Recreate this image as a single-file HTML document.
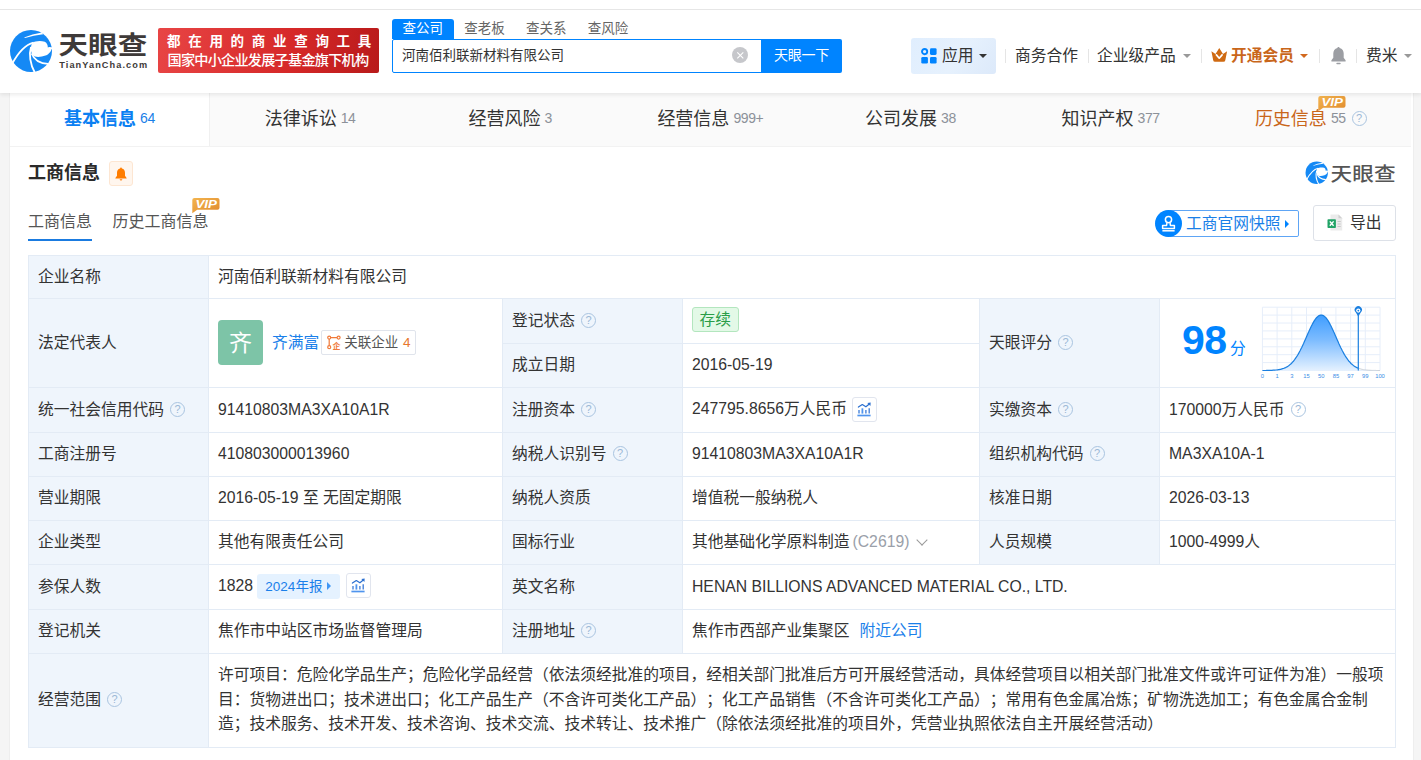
<!DOCTYPE html>
<html lang="zh-CN">
<head>
<meta charset="utf-8">
<title>河南佰利联新材料有限公司 - 天眼查</title>
<style>
*{box-sizing:border-box;margin:0;padding:0}
html,body{width:1421px;height:760px;overflow:hidden}
body{background:#f5f5f5;font-family:"Liberation Sans","Noto Sans CJK SC",sans-serif;font-size:16px;color:#333;position:relative}
a{color:#1a80ea;text-decoration:none}
.abs{position:absolute}
/* header */
#hd{position:absolute;left:0;top:0;width:1421px;height:93px;background:#fff;box-shadow:0 2px 4px rgba(0,0,0,.08);z-index:5}
#hd .topline{position:absolute;left:0;top:9px;width:1421px;height:1px;background:#e6e6e6}
#logo{position:absolute;left:6px;top:26px;width:146px;height:50px}
#banner{position:absolute;left:158px;top:28px;width:221px;height:45px;border-radius:2px;background:linear-gradient(100deg,#e84545 0%,#d62828 60%,#b81a1a 100%);color:#fff;font-weight:bold;text-align:center;overflow:hidden}
#banner .l1{position:absolute;left:0;top:4.5px;width:221px;font-size:13.5px;line-height:18px;letter-spacing:7.7px;padding-left:9px;white-space:nowrap;text-align:left}
#banner .l2{position:absolute;left:0;top:21.5px;width:221px;font-size:14.2px;line-height:20px;letter-spacing:-.8px;padding-left:9.5px;white-space:nowrap;font-weight:500;text-align:left}
#stabs{position:absolute;left:392px;top:19px;height:20px;font-size:13.5px;line-height:19px;white-space:nowrap;display:flex}
#stabs span{display:block;height:20px;width:61.7px;text-align:center;color:#666}
#stabs span.on{background:#0084ff;color:#fff;border-radius:3px 3px 0 0}
#sbox{position:absolute;left:392px;top:39px;width:370px;height:34px;border:1px solid #0084ff;border-radius:2px 0 0 2px;background:#fff;font-size:13.5px;line-height:31px;padding-left:9px;color:#333}
#sclear{position:absolute;left:731.5px;top:46.7px;width:16.6px;height:16.6px;border-radius:50%;background:#c6c7cb}
#sbtn{position:absolute;left:761px;top:39px;width:81px;height:34px;background:#0084ff;color:#fff;font-size:14px;line-height:32px;text-align:center;border-radius:0 2px 2px 0;letter-spacing:-.2px}
.nav{position:absolute;top:38px;height:36px;line-height:35px;font-size:15.75px;color:#333;white-space:nowrap}
.sep{position:absolute;top:49px;width:1px;height:14px;background:#e5e5e5}
.caret{display:inline-block;width:0;height:0;border-left:4px solid transparent;border-right:4px solid transparent;border-top:4px solid #999;vertical-align:middle;margin-left:5px;position:relative;top:-1px}
#app{position:absolute;left:911px;top:38px;width:85px;height:36px;background:linear-gradient(125deg,#e0eefe 0%,#e6f1fd 55%,#dce9fa 100%);border-radius:3px}
/* card */
#card{position:absolute;left:9px;top:93px;width:1405px;height:680px;background:#fff;border-right:1px solid #eee;border-left:1px solid #eee}
#tabs{position:absolute;left:0;top:0;width:1401px;height:54px;background:#fafafa;display:flex;border-bottom:1px solid #f2f2f2}
#tabs .t{width:200.15px;height:53px;line-height:53px;text-align:center;font-size:18px;color:#333;white-space:nowrap;position:relative}
#tabs .t i{font-style:normal;font-size:14px;color:#8c9199;margin-left:4px;position:relative;top:-2.5px;letter-spacing:-.4px}
#tabs .t.on{background:#fff;color:#0b80f2;font-weight:bold;border-right:1px solid #f0f0f0;width:200px}
#tabs .t.on i{color:#1a7fe8;font-weight:normal}
#tabs .t.his{color:#c9661a}
.vip{position:absolute;background:linear-gradient(180deg,#f0b050,#e8952f);color:#fff;font-size:10px;font-weight:bold;font-style:italic;line-height:11px;height:11px;padding:0 3px;border-radius:2px;letter-spacing:.2px}
.q{display:inline-block;width:15px;height:15px;border:1.4px solid #a9c4e0;border-radius:50%;color:#9bb8d6;font-size:11px;line-height:12.5px;letter-spacing:0;font-weight:normal;text-align:center;vertical-align:middle;position:relative;top:-1px;margin-left:6px;font-family:"Liberation Sans",sans-serif}
h2{position:absolute;left:18px;top:67px;font-size:18px;line-height:26px;font-weight:bold;color:#2a2a2a}
/* table */
table{position:absolute;left:18px;top:162px;width:1368px;border-collapse:collapse;table-layout:fixed;font-size:15.75px;color:#333}
td{border:1px solid #e3ebf5;height:44px;padding:0 9px 1px;vertical-align:middle;white-space:nowrap;overflow:hidden;letter-spacing:0;line-height:22px;text-spacing-trim:space-all}
tr.h43 td{height:43px}tr.h45 td{height:45px}
td.k{background:#eff5fc}
#subtabs{position:absolute;left:18px;top:114px;height:34px;font-size:16px;line-height:30px;white-space:nowrap;color:#555}
#subtabs span{display:inline-block;height:34px;margin-right:20.5px}
#subtabs span.on{border-bottom:2px solid #1a7be0}
#snap{position:absolute;left:1146px;top:117px;width:143px;height:27px;border:1px solid #5ea5f5;border-radius:14px 2px 2px 14px;color:#1a7fe8;font-size:15.75px;line-height:25px;padding-left:29px;white-space:nowrap}
#snap .ic{position:absolute;left:-2px;top:-1px;width:27px;height:27px;border-radius:50%;background:#0084ff}
#snap b{display:inline-block;width:0;height:0;border-top:4px solid transparent;border-bottom:4px solid transparent;border-left:4.5px solid #0084ff;margin-left:4px;vertical-align:middle;position:relative;top:-1px}
#exp{position:absolute;left:1303px;top:112px;width:83px;height:36px;border:1px solid #dde1e8;border-radius:3px;font-size:15.75px;line-height:34px;padding-left:36px;color:#333;white-space:nowrap}
#exp .xl{position:absolute;left:13px;top:8px}
tr.scope td{height:94px;white-space:normal;line-height:24.75px;letter-spacing:0;padding-right:11px}
.ava{display:inline-block;width:45px;height:45px;border-radius:4px;background:#7dc4a7;color:#fff;font-size:23px;line-height:46px;text-align:center;vertical-align:middle;margin-right:9px;letter-spacing:0}
.nm{vertical-align:middle}
.rel{display:inline-block;height:25px;border:1px solid #e0e4ec;border-radius:2px;font-size:13.5px;line-height:23px;padding:0 4px 0 5px;margin-left:2px;vertical-align:middle;color:#555}
.rel em{font-style:normal;color:#e8772e;margin-left:1px}
.rel svg{vertical-align:middle;margin-right:3px;position:relative;top:-1px}
.st{display:inline-block;height:25px;padding:0 6.5px;border:1px solid #b3e6be;background:#e3f9e7;color:#2a9d48;font-size:15.75px;line-height:23px;border-radius:3px;position:relative;top:-1px}
.g{color:#9aa0a9;margin-left:3px}
.ibtn{display:inline-block;width:25px;height:25px;border:1px solid #e1e5ee;border-radius:3px;vertical-align:middle;margin-left:5px;position:relative;top:0}
.ibtn svg{position:absolute;left:-.5px;top:-.5px}
.yr{display:inline-block;height:25px;padding:0 8.3px;background:#e5f2ff;color:#1a80ea;font-size:13.5px;line-height:25px;border-radius:3px;vertical-align:middle;margin-left:4px;position:relative;top:0}
.yr b{display:inline-block;width:0;height:0;border-top:4px solid transparent;border-bottom:4px solid transparent;border-left:4.6px solid #3f97f5;margin-left:5px;vertical-align:middle;position:relative;top:-1px}
.chev{display:inline-block;width:8px;height:8px;border-right:1.4px solid #999;border-bottom:1.4px solid #999;transform:rotate(45deg);margin-left:9px;position:relative;top:-3.5px}
td.score{position:relative;padding:0!important}
.n98{position:absolute;left:22px;top:18px;font-size:41px;line-height:46px;font-weight:bold;color:#0084ff;letter-spacing:-.5px}
.fen{position:absolute;left:70px;top:39px;font-size:15.75px;line-height:22px;color:#0084ff}
.chart{position:absolute;left:96px;top:1px}
#tbell{position:absolute;left:99px;top:68px;width:24px;height:25px;border:1px solid #fde6d2;background:#fff6ee;border-radius:3px}
#tbell svg{position:absolute;left:4px;top:4.5px}
</style>
</head>
<body>
<div id="hd">
  <div class="topline"></div>
  <svg id="logo" viewBox="0 0 146 50" width="146" height="50">
    <circle cx="25" cy="25" r="21" fill="#1589f5"/>
    <path d="M18.1 11.4 Q26 7.8 36 6.4 L37.2 8.2 Q27.5 9.3 19 11.9 Z" fill="#fff"/>
    <path d="M26.3 16.8 C29 15.2 34 14.3 38.8 15.8 C41 17 41.9 19.5 41.8 21.4 L43.2 21 L48 21.6 L48 23.4 L45.6 23 C45 26 42 28.8 39.5 29.6 C36 31 31.5 31.2 28.9 30.6 C27 29.8 25.7 27.6 25.2 25.8 C24.5 23.5 24.8 19.5 26.3 16.8 Z" fill="#fff"/>
    <path d="M27.5 16.6 C20 18.5 12.5 26 6 38" fill="none" stroke="#fff" stroke-width="1.7"/>
    <path d="M25 21 C22.8 28 24 38.5 29 47" fill="none" stroke="#fff" stroke-width="1.8"/>
    <path d="M25.6 27.5 C28 33.5 33.5 37.6 42 37.9" fill="none" stroke="#fff" stroke-width="1.8"/>
    <text x="52.6" y="27.6" font-size="25.5" font-weight="700" fill="#3e3a39" textLength="88.6" lengthAdjust="spacingAndGlyphs" font-family="'Liberation Sans','Noto Sans CJK SC',sans-serif">天眼查</text>
    <text x="53.3" y="42" font-size="9.2" font-weight="bold" fill="#3e3a39" textLength="87.8" lengthAdjust="spacing" font-family="'Liberation Sans',sans-serif">TianYanCha.com</text>
  </svg>
  <div id="banner"><div class="l1">都在用的商业查询工具</div><div class="l2">国家中小企业发展子基金旗下机构</div></div>
  <div id="stabs"><span class="on">查公司</span><span>查老板</span><span>查关系</span><span>查风险</span></div>
  <div id="sbox">河南佰利联新材料有限公司</div>
  <div id="sclear"><svg width="16.6" height="16.6" viewBox="0 0 16.6 16.6" style="display:block"><path d="M5.3 5.3L11.3 11.3M11.3 5.3L5.3 11.3" stroke="#fff" stroke-width="1.1"/></svg></div>
  <div id="sbtn">天眼一下</div>
  <div id="app"></div>
  <svg class="abs" style="left:921px;top:48px" width="16" height="16" viewBox="0 0 16 16"><circle cx="3.6" cy="3.6" r="2.6" fill="none" stroke="#0084ff" stroke-width="1.9"/><rect x="9" y="0.3" width="6.6" height="6.6" rx="1.3" fill="#0084ff"/><rect x="0.3" y="9" width="6.6" height="6.6" rx="1.3" fill="#0084ff"/><rect x="9" y="9" width="6.6" height="6.6" rx="1.3" fill="#0084ff"/></svg>
  <div class="nav" style="left:942px">应用<span class="caret" style="border-top-color:#333;margin-left:5.5px"></span></div>
  <div class="sep" style="left:1005px"></div>
  <div class="nav" style="left:1015px">商务合作</div>
  <div class="sep" style="left:1088px"></div>
  <div class="nav" style="left:1097px">企业级产品<span class="caret" style="margin-left:7px"></span></div>
  <div class="sep" style="left:1201px"></div>
  <svg class="abs" style="left:1211px;top:48px" width="16.5" height="14" viewBox="0 0 16.5 14"><path d="M0.4 3.3 L4.5 5.9 L8.25 0.1 L12 5.9 L16.1 3.3 L14.3 12.2 Q14.1 13.7 12.4 13.7 L4.1 13.7 Q2.4 13.7 2.2 12.2 Z" fill="#cf6a12"/><path d="M5.4 6.9 L8.25 10.2 L11.1 6.9" fill="none" stroke="#fff" stroke-width="1.7" stroke-linecap="round" stroke-linejoin="round"/></svg>
  <div class="nav" style="left:1231px;color:#c9661a;font-weight:bold">开通会员<span class="caret" style="border-top-color:#d2691e;margin-left:6px"></span></div>
  <div class="sep" style="left:1319px"></div>
  <svg class="abs" style="left:1330px;top:46px" width="17" height="19" viewBox="0 0 17 19"><path d="M8.5 0.9 C9.2 0.9 9.6 1.4 9.6 2.1 C12.4 2.7 13.7 5 13.7 7.6 L13.7 11.8 L15.6 14.3 L15.6 15.5 L1.4 15.5 L1.4 14.3 L3.3 11.8 L3.3 7.6 C3.3 5 4.6 2.7 7.4 2.1 C7.4 1.4 7.8 0.9 8.5 0.9 Z" fill="#9c9ea3"/><rect x="6.3" y="16.8" width="4.4" height="1.5" rx=".75" fill="#9c9ea3"/></svg>
  <div class="sep" style="left:1356px"></div>
  <div class="nav" style="left:1366px">费米<span class="caret" style="margin-left:6px"></span></div>
</div>
<div id="card">
  <div id="tabs">
    <div class="t on">基本信息<i>64</i></div>
    <div class="t">法律诉讼<i>14</i></div>
    <div class="t">经营风险<i>3</i></div>
    <div class="t">经营信息<i>999+</i></div>
    <div class="t">公司发展<i>38</i></div>
    <div class="t">知识产权<i>377</i></div>
    <div class="t his">历史信息<i>55</i><span class="q" style="margin-left:6px;top:-2px">?</span></div>
  </div>
  <svg class="abs" style="left:1308px;top:3px" width="28" height="16" viewBox="0 0 28 16"><defs><linearGradient id="vg1308" x1="0" y1="0" x2="1" y2="1"><stop offset="0" stop-color="#f3b44f"/><stop offset="1" stop-color="#e08a2c"/></linearGradient></defs><path d="M2.5 0H25.5Q27.5 0 27.5 2V9.8Q27.5 11.8 25.5 11.8H5.2L0.3 15.2V2Q0.3 0 2.5 0Z" fill="url(#vg1308)"/><text x="14.2" y="9.9" text-anchor="middle" font-size="11" font-weight="bold" font-style="italic" fill="#fff" font-family="'Liberation Sans',sans-serif" textLength="21.5" lengthAdjust="spacingAndGlyphs">VIP</text></svg>
  <h2>工商信息</h2>
  <div id="tbell"><svg width="14" height="14" viewBox="0 0 14 14"><path d="M7 0.6C7.6 0.6 7.9 1 7.9 1.5C10 2 11 3.8 11 5.8V8.8L12.6 10.9V11.6H1.4V10.9L3 8.8V5.8C3 3.8 4 2 6.1 1.5C6.1 1 6.4 0.6 7 0.6Z" fill="#ff7d00"/><path d="M5.6 12.3H8.4Q8.2 13.5 7 13.5Q5.8 13.5 5.6 12.3Z" fill="#ff7d00"/></svg></div>
  <svg class="abs" style="left:1295px;top:68px" width="92" height="25" viewBox="0 0 92 25">
    <g transform="translate(-1.6,-1.6) scale(0.533)"><circle cx="25" cy="25" r="21" fill="#1589f5"/>
    <path d="M18.1 11.4 Q26 7.8 36 6.4 L37.2 8.2 Q27.5 9.3 19 11.9 Z" fill="#fff"/>
    <path d="M26.3 16.8 C29 15.2 34 14.3 38.8 15.8 C41 17 41.9 19.5 41.8 21.4 L43.2 21 L48 21.6 L48 23.4 L45.6 23 C45 26 42 28.8 39.5 29.6 C36 31 31.5 31.2 28.9 30.6 C27 29.8 25.7 27.6 25.2 25.8 C24.5 23.5 24.8 19.5 26.3 16.8 Z" fill="#fff"/>
    <path d="M27.5 16.6 C20 18.5 12.5 26 6 38" fill="none" stroke="#fff" stroke-width="2"/>
    <path d="M25 21 C22.8 28 24 38.5 29 47" fill="none" stroke="#fff" stroke-width="2"/>
    <path d="M25.6 27.5 C28 33.5 33.5 37.6 42 37.9" fill="none" stroke="#fff" stroke-width="2"/></g>
    <text x="25.6" y="19.6" font-size="19" font-weight="500" fill="#555" textLength="65" lengthAdjust="spacingAndGlyphs" font-family="'Liberation Sans','Noto Sans CJK SC',sans-serif">天眼查</text>
  </svg>
  <div id="subtabs"><span class="on">工商信息</span><span>历史工商信息</span></div>
  <svg class="abs" style="left:182px;top:105px" width="28" height="16" viewBox="0 0 28 16"><defs><linearGradient id="vg182" x1="0" y1="0" x2="1" y2="1"><stop offset="0" stop-color="#f3b44f"/><stop offset="1" stop-color="#e08a2c"/></linearGradient></defs><path d="M2.5 0H25.5Q27.5 0 27.5 2V9.8Q27.5 11.8 25.5 11.8H5.2L0.3 15.2V2Q0.3 0 2.5 0Z" fill="url(#vg182)"/><text x="14.2" y="9.9" text-anchor="middle" font-size="11" font-weight="bold" font-style="italic" fill="#fff" font-family="'Liberation Sans',sans-serif" textLength="21.5" lengthAdjust="spacingAndGlyphs">VIP</text></svg>
  <div id="snap"><span class="ic"><svg width="27" height="27" viewBox="0 0 27 27"><circle cx="13.5" cy="9.6" r="3.1" fill="none" stroke="#fff" stroke-width="1.5"/><path d="M12 12.4 L11.6 15.4 L7.6 15.4 L7.6 18.4 L19.4 18.4 L19.4 15.4 L15.4 15.4 L15 12.4" fill="none" stroke="#fff" stroke-width="1.5" stroke-linejoin="round"/><path d="M7.4 20.8 L19.6 20.8" stroke="#fff" stroke-width="1.5"/></svg></span>工商官网快照<b></b></div>
  <div id="exp"><svg class="xl" width="16" height="17" viewBox="0 0 16 17"><path d="M3.5 0.5 L11.5 0.5 L15.2 4.2 L15.2 16.5 L3.5 16.5 Z" fill="#ebebeb"/><path d="M11.5 0.5 L15.2 4.2 L11.5 4.2 Z" fill="#d0d0d0"/><path d="M10.5 7.5h3.2M10.5 10h3.2M10.5 12.5h3.2" stroke="#c8c8c8" stroke-width="1.2"/><rect x="0.5" y="5.2" width="8.4" height="8.8" rx="0.8" fill="#21a366"/><path d="M2.8 7.4 L6.6 11.8 M6.6 7.4 L2.8 11.8" stroke="#fff" stroke-width="1.4"/></svg>导出</div>
  <table>
    <colgroup><col style="width:180px"><col style="width:294px"><col style="width:180px"><col style="width:297px"><col style="width:180px"><col style="width:236px"></colgroup>
    <tr class="h43"><td class="k">企业名称</td><td colspan="5">河南佰利联新材料有限公司</td></tr>
    <tr class="h45"><td class="k" rowspan="2">法定代表人</td><td rowspan="2"><span class="ava">齐</span><a class="nm">齐满富</a><span class="rel"><svg width="14" height="15" viewBox="0 0 14 15"><g fill="none" stroke="#f07a3a" stroke-width="1.2"><circle cx="2.2" cy="2.6" r="1.5"/><circle cx="11.6" cy="2.6" r="1.5"/><circle cx="2.2" cy="12.2" r="1.5"/><path d="M3.7 2.6H10.1M2.2 4.1V10.7"/></g><text x="9.6" y="14" font-size="8" text-anchor="middle" fill="#f07a3a" font-weight="bold" font-family="'Liberation Sans','Noto Sans CJK SC',sans-serif">企</text></svg>关联企业 <em>4</em></span></td><td class="k">登记状态<span class="q">?</span></td><td><span class="st">存续</span></td><td class="k" rowspan="2">天眼评分<span class="q">?</span></td><td rowspan="2" class="score"><span class="n98">98</span><span class="fen">分</span><svg class="chart" width="135" height="85" viewBox="0 0 135 85"><defs><linearGradient id="gf" x1="0" y1="0" x2="0" y2="1"><stop offset="0" stop-color="#3f9dff"/><stop offset=".45" stop-color="#7dbcff"/><stop offset="1" stop-color="#e4f1ff"/></linearGradient></defs><path d="M6.4 7.2V70.5M21.1 7.2V70.5M35.8 7.2V70.5M50.5 7.2V70.5M65.2 7.2V70.5M79.9 7.2V70.5M94.6 7.2V70.5M109.3 7.2V70.5M124.0 7.2V70.5M6.4 7.2H124.0M6.4 15.1H124.0M6.4 23.0H124.0M6.4 30.9H124.0M6.4 38.9H124.0M6.4 46.8H124.0M6.4 54.7H124.0M6.4 62.6H124.0M6.4 70.5H124.0" stroke="#e6eefa" stroke-width="1" fill="none"/><path d="M6.4 70.5 L7.1 70.5 L7.8 70.5 L8.5 70.5 L9.2 70.5 L9.9 70.5 L10.6 70.4 L11.3 70.4 L12.0 70.4 L12.7 70.4 L13.4 70.4 L14.1 70.4 L14.8 70.3 L15.5 70.3 L16.2 70.3 L16.9 70.2 L17.6 70.2 L18.3 70.2 L19.0 70.1 L19.7 70.0 L20.4 70.0 L21.1 69.9 L21.8 69.8 L22.5 69.7 L23.2 69.6 L23.9 69.4 L24.6 69.3 L25.3 69.1 L26.0 68.9 L26.7 68.7 L27.4 68.5 L28.1 68.2 L28.8 67.9 L29.5 67.6 L30.2 67.2 L30.9 66.9 L31.6 66.4 L32.3 66.0 L33.0 65.5 L33.7 64.9 L34.4 64.3 L35.1 63.7 L35.8 63.0 L36.5 62.2 L37.2 61.5 L37.9 60.6 L38.6 59.7 L39.3 58.7 L40.0 57.7 L40.7 56.7 L41.4 55.5 L42.1 54.4 L42.8 53.1 L43.5 51.8 L44.2 50.5 L44.9 49.1 L45.6 47.7 L46.3 46.2 L47.0 44.7 L47.7 43.2 L48.4 41.6 L49.1 40.0 L49.8 38.4 L50.5 36.8 L51.2 35.2 L51.9 33.6 L52.6 32.1 L53.3 30.5 L54.0 29.0 L54.7 27.5 L55.4 26.1 L56.1 24.7 L56.8 23.4 L57.5 22.1 L58.2 20.9 L58.9 19.9 L59.6 18.9 L60.3 18.0 L61.0 17.2 L61.7 16.6 L62.4 16.0 L63.1 15.6 L63.8 15.3 L64.5 15.1 L65.2 15.0 L65.9 15.1 L66.6 15.3 L67.3 15.6 L68.0 16.0 L68.7 16.6 L69.4 17.2 L70.1 18.0 L70.8 18.9 L71.5 19.9 L72.2 20.9 L72.9 22.1 L73.6 23.4 L74.3 24.7 L75.0 26.1 L75.7 27.5 L76.4 29.0 L77.1 30.5 L77.8 32.1 L78.5 33.6 L79.2 35.2 L79.9 36.8 L80.6 38.4 L81.3 40.0 L82.0 41.6 L82.7 43.2 L83.4 44.7 L84.1 46.2 L84.8 47.7 L85.5 49.1 L86.2 50.5 L86.9 51.8 L87.6 53.1 L88.3 54.4 L89.0 55.5 L89.7 56.7 L90.4 57.7 L91.1 58.7 L91.8 59.7 L92.5 60.6 L93.2 61.5 L93.9 62.2 L94.6 63.0 L95.3 63.7 L96.0 64.3 L96.7 64.9 L97.4 65.5 L98.1 66.0 L98.8 66.4 L99.5 66.9 L100.2 67.2 L100.9 67.6 L101.6 67.9 L102.3 68.2 L102.3 68.2 L102.3 70.5 L6.4 70.5 Z" fill="url(#gf)"/><path d="M102.3 68.2 L103.2 68.5 L104.1 68.8 L105.0 69.1 L105.9 69.3 L106.8 69.5 L107.7 69.7 L108.6 69.8 L109.5 69.9 L110.4 70.0 L111.3 70.1 L112.2 70.2 L113.1 70.2 L114.0 70.3 L114.9 70.3 L115.8 70.4 L116.7 70.4 L117.6 70.4 L118.5 70.4 L119.4 70.4 L120.3 70.5 L121.2 70.5 L122.1 70.5 L123.0 70.5 L123.9 70.5 L124.0 70.5" fill="none" stroke="#c9d0d8" stroke-width="1"/><path d="M6.4 70.5 L7.1 70.5 L7.8 70.5 L8.5 70.5 L9.2 70.5 L9.9 70.5 L10.6 70.4 L11.3 70.4 L12.0 70.4 L12.7 70.4 L13.4 70.4 L14.1 70.4 L14.8 70.3 L15.5 70.3 L16.2 70.3 L16.9 70.2 L17.6 70.2 L18.3 70.2 L19.0 70.1 L19.7 70.0 L20.4 70.0 L21.1 69.9 L21.8 69.8 L22.5 69.7 L23.2 69.6 L23.9 69.4 L24.6 69.3 L25.3 69.1 L26.0 68.9 L26.7 68.7 L27.4 68.5 L28.1 68.2 L28.8 67.9 L29.5 67.6 L30.2 67.2 L30.9 66.9 L31.6 66.4 L32.3 66.0 L33.0 65.5 L33.7 64.9 L34.4 64.3 L35.1 63.7 L35.8 63.0 L36.5 62.2 L37.2 61.5 L37.9 60.6 L38.6 59.7 L39.3 58.7 L40.0 57.7 L40.7 56.7 L41.4 55.5 L42.1 54.4 L42.8 53.1 L43.5 51.8 L44.2 50.5 L44.9 49.1 L45.6 47.7 L46.3 46.2 L47.0 44.7 L47.7 43.2 L48.4 41.6 L49.1 40.0 L49.8 38.4 L50.5 36.8 L51.2 35.2 L51.9 33.6 L52.6 32.1 L53.3 30.5 L54.0 29.0 L54.7 27.5 L55.4 26.1 L56.1 24.7 L56.8 23.4 L57.5 22.1 L58.2 20.9 L58.9 19.9 L59.6 18.9 L60.3 18.0 L61.0 17.2 L61.7 16.6 L62.4 16.0 L63.1 15.6 L63.8 15.3 L64.5 15.1 L65.2 15.0 L65.9 15.1 L66.6 15.3 L67.3 15.6 L68.0 16.0 L68.7 16.6 L69.4 17.2 L70.1 18.0 L70.8 18.9 L71.5 19.9 L72.2 20.9 L72.9 22.1 L73.6 23.4 L74.3 24.7 L75.0 26.1 L75.7 27.5 L76.4 29.0 L77.1 30.5 L77.8 32.1 L78.5 33.6 L79.2 35.2 L79.9 36.8 L80.6 38.4 L81.3 40.0 L82.0 41.6 L82.7 43.2 L83.4 44.7 L84.1 46.2 L84.8 47.7 L85.5 49.1 L86.2 50.5 L86.9 51.8 L87.6 53.1 L88.3 54.4 L89.0 55.5 L89.7 56.7 L90.4 57.7 L91.1 58.7 L91.8 59.7 L92.5 60.6 L93.2 61.5 L93.9 62.2 L94.6 63.0 L95.3 63.7 L96.0 64.3 L96.7 64.9 L97.4 65.5 L98.1 66.0 L98.8 66.4 L99.5 66.9 L100.2 67.2 L100.9 67.6 L101.6 67.9 L102.3 68.2 L102.3 68.2" fill="none" stroke="#1a7fe0" stroke-width="1.2"/><path d="M102.3 14V70.5" stroke="#1a7fe0" stroke-width="1.2"/><path d="M102.3 16.5 L99.7 12.2 A3.6 3.6 0 1 1 104.89999999999999 12.2 Z" fill="#1a7fe0"/><circle cx="102.3" cy="10.6" r="2.1" fill="#fff"/><circle cx="102.3" cy="10.6" r=".9" fill="#1a7fe0"/><g font-size="5.8" fill="#3a8ee6" font-family="'Liberation Sans',sans-serif"><text x="6.4" y="78.2" text-anchor="middle">0</text><text x="21.1" y="78.2" text-anchor="middle">1</text><text x="35.8" y="78.2" text-anchor="middle">3</text><text x="50.5" y="78.2" text-anchor="middle">15</text><text x="65.2" y="78.2" text-anchor="middle">50</text><text x="79.9" y="78.2" text-anchor="middle">85</text><text x="94.6" y="78.2" text-anchor="middle">97</text><text x="109.3" y="78.2" text-anchor="middle">99</text><text x="124.0" y="78.2" text-anchor="middle">100</text></g></svg></td></tr>
    <tr><td class="k">成立日期</td><td>2016-05-19</td></tr>
    <tr class="h45"><td class="k">统一社会信用代码<span class="q">?</span></td><td>91410803MA3XA10A1R</td><td class="k">注册资本<span class="q">?</span></td><td>247795.8656万人民币<span class="ibtn"><svg width="24" height="24" viewBox="0 0 24 24"><path d="M5.4 17.5H18.6" stroke="#4f94ee" stroke-width="1.7"/><path d="M7 12V15.6M13.9 12V15.6M17.2 10.2V15.6" stroke="#3a7ad8" stroke-width="1.3"/><path d="M10.4 10.3V15.6" stroke="#4f94ee" stroke-width="1.8"/><path d="M6.4 9.1L10.3 6.5L13.9 8.8L17 6.3" fill="none" stroke="#2a6fd0" stroke-width="1.2" stroke-linejoin="round" stroke-linecap="round"/><path d="M15.3 4.9L18.7 4.6L18.4 8Z" fill="#2a6fd0"/></svg></span></td><td class="k">实缴资本<span class="q">?</span></td><td>170000万人民币<span class="q">?</span></td></tr>
    <tr><td class="k">工商注册号</td><td>410803000013960</td><td class="k">纳税人识别号<span class="q">?</span></td><td>91410803MA3XA10A1R</td><td class="k">组织机构代码<span class="q">?</span></td><td>MA3XA10A-1</td></tr>
    <tr><td class="k">营业期限</td><td>2016-05-19 至 无固定期限</td><td class="k">纳税人资质</td><td>增值税一般纳税人</td><td class="k">核准日期</td><td>2026-03-13</td></tr>
    <tr><td class="k">企业类型</td><td>其他有限责任公司</td><td class="k">国标行业</td><td>其他基础化学原料制造<span class="g">(C2619)</span><span class="chev"></span></td><td class="k">人员规模</td><td>1000-4999人</td></tr>
    <tr class="h45"><td class="k">参保人数</td><td>1828<span class="yr">2024年报<b></b></span><span class="ibtn" style="top:-1px;margin-left:6px"><svg width="24" height="24" viewBox="0 0 24 24"><path d="M5.4 17.5H18.6" stroke="#4f94ee" stroke-width="1.7"/><path d="M7 12V15.6M13.9 12V15.6M17.2 10.2V15.6" stroke="#3a7ad8" stroke-width="1.3"/><path d="M10.4 10.3V15.6" stroke="#4f94ee" stroke-width="1.8"/><path d="M6.4 9.1L10.3 6.5L13.9 8.8L17 6.3" fill="none" stroke="#2a6fd0" stroke-width="1.2" stroke-linejoin="round" stroke-linecap="round"/><path d="M15.3 4.9L18.7 4.6L18.4 8Z" fill="#2a6fd0"/></svg></span></td><td class="k">英文名称</td><td colspan="3">HENAN BILLIONS ADVANCED MATERIAL CO., LTD.</td></tr>
    <tr><td class="k">登记机关</td><td>焦作市中站区市场监督管理局</td><td class="k">注册地址<span class="q">?</span></td><td colspan="3">焦作市西部产业集聚区<a style="margin-left:10px">附近公司</a></td></tr>
    <tr class="scope"><td class="k">经营范围<span class="q">?</span></td><td colspan="5">许可项目：危险化学品生产；危险化学品经营（依法须经批准的项目，经相关部门批准后方可开展经营活动，具体经营项目以相关部门批准文件或许可证件为准）一般项目：货物进出口；技术进出口；化工产品生产（不含许可类化工产品）；化工产品销售（不含许可类化工产品）；常用有色金属冶炼；矿物洗选加工；有色金属合金制造；技术服务、技术开发、技术咨询、技术交流、技术转让、技术推广（除依法须经批准的项目外，凭营业执照依法自主开展经营活动）</td></tr>
  </table>
</div>
</body>
</html>
